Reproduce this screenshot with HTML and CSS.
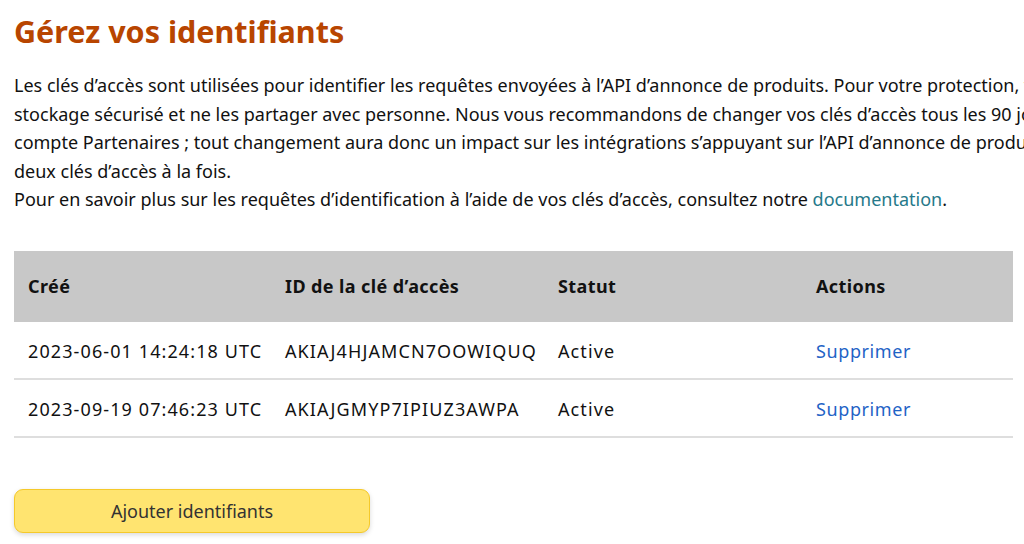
FILE: index.html
```html
<!DOCTYPE html>
<html lang="fr">
<head>
<meta charset="utf-8">
<link rel="stylesheet" href="styles.css">
</head>
<body>
<main class="page">
  <h1 class="title">Gérez vos identifiants</h1>
  <p class="intro">
    <span class="line">Les clés d’accès sont utilisées pour identifier les requêtes envoyées à l’API d’annonce de produits. Pour votre protection, vous devez conserver vos clés dans un espace de</span>
    <span class="line">stockage sécurisé et ne les partager avec personne. Nous vous recommandons de changer vos clés d’accès tous les 90 jours. Elles sont liées à votre</span>
    <span class="line">compte Partenaires ; tout changement aura donc un impact sur les intégrations s’appuyant sur l’API d’annonce de produits. Vous pouvez avoir au maximum</span>
    <span class="line">deux clés d’accès à la fois.</span>
    <span class="line">Pour en savoir plus sur les requêtes d’identification à l’aide de vos clés d’accès, consultez notre <a class="doc" href="#">documentation</a>.</span>
  </p>
  <table class="keys">
    <colgroup>
      <col class="c1"><col class="c2"><col class="c3"><col class="c4">
    </colgroup>
    <thead>
      <tr><th>Créé</th><th>ID de la clé d’accès</th><th>Statut</th><th>Actions</th></tr>
    </thead>
    <tbody>
      <tr><td>2023-06-01 14:24:18 UTC</td><td>AKIAJ4HJAMCN7OOWIQUQ</td><td>Active</td><td><a class="del" href="#">Supprimer</a></td></tr>
      <tr><td>2023-09-19 07:46:23 UTC</td><td>AKIAJGMYP7IPIUZ3AWPA</td><td>Active</td><td><a class="del" href="#">Supprimer</a></td></tr>
    </tbody>
  </table>
  <button class="add">Ajouter identifiants</button>
</main>
</body>
</html>
```
FILE: styles.css
```css
html, body {
  margin: 0;
  padding: 0;
  background: #fff;
  overflow: hidden;
}
body {
  font-family: "Noto Sans", "Open Sans", sans-serif;
  color: #111;
  width: 1024px;
  height: 544px;
}
.page {
  padding: 0 0 0 14px;
}
.title {
  margin: 0;
  padding-top: 12px;
  font-size: 30.5px;
  line-height: 38px;
  font-weight: 700;
  color: #b84500;
}
.intro {
  margin: 21px 0 0;
  font-size: 18px;
  line-height: 28.5px;
}
.line {
  display: block;
  white-space: nowrap;
}
.doc {
  color: #26798a;
  text-decoration: none;
}
.keys {
  margin-top: 37px;
  width: 999px;
  table-layout: fixed;
  border-collapse: collapse;
  font-size: 18px;
}
.c1 { width: 257px; }
.c2 { width: 273px; }
.c3 { width: 258px; }
.c4 { width: 211px; }
.keys th {
  background: #c8c8c8;
  text-align: left;
  font-weight: 700;
  letter-spacing: 0.4px;
  height: 71px;
  padding: 0 14px;
  white-space: nowrap;
}
.keys td {
  height: 53px;
  padding: 3px 14px 0;
  letter-spacing: 1.1px;
  border-bottom: 2px solid #dedede;
  white-space: nowrap;
}
.del {
  color: #1f63c6;
  text-decoration: none;
  letter-spacing: 0.6px;
}
.add {
  display: block;
  margin-top: 51px;
  width: 356px;
  height: 44px;
  background: #ffe470;
  border: 1px solid #f5c92a;
  border-radius: 9px;
  box-shadow: 0 2px 5px rgba(0,0,0,0.15);
  font-family: inherit;
  font-size: 18px;
  color: #333;
}
```
